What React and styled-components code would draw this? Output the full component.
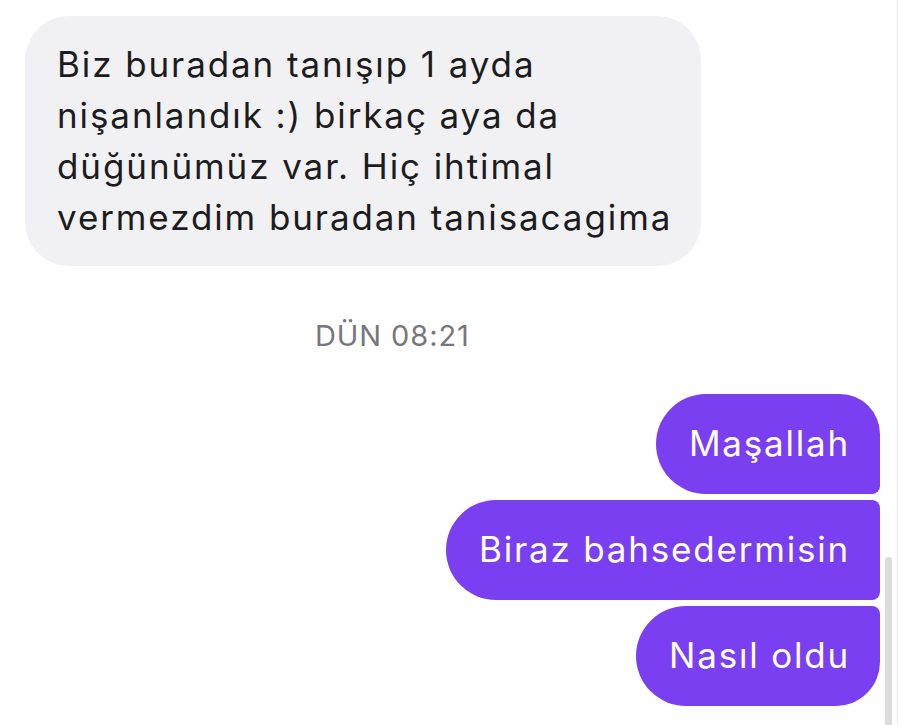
import React from 'react';
import styled, { createGlobalStyle } from 'styled-components';

const GlobalStyle = createGlobalStyle`
  html, body {
    margin: 0;
    padding: 0;
    background: #ffffff;
  }
  body {
    font-family: Inter, "Noto Sans", "Liberation Sans", sans-serif;
    -webkit-font-smoothing: antialiased;
  }
`;

const incoming = [
    'Biz buradan tanışıp 1 ayda',
    'nişanlandık :) birkaç aya da',
    'düğünümüz var. Hiç ihtimal',
    'vermezdim buradan tanisacagima',
];

const outgoing = ['Maşallah', 'Biraz bahsedermisin', 'Nasıl oldu'];

// köşe yarıçapları: grubun neresinde olduğuna göre
const corners = {
    first: '50px 40px 8px 50px',
    middle: '50px 8px 8px 50px',
    last: '50px 8px 44px 50px',
};

const App = () => {
    const groupPos = (i, n) => (i === 0 ? 'first' : i === n - 1 ? 'last' : 'middle');

    return (
        <>
            <GlobalStyle />
            <Screen>
                <Thread>
                    {/* gelen mesaj */}
                    <IncomingRow>
                        <GreyBubble>
                            {incoming.map((line) => (
                                <Line key={line}>{line}</Line>
                            ))}
                        </GreyBubble>
                    </IncomingRow>

                    {/* zaman */}
                    <Stamp>DÜN 08:21</Stamp>

                    {/* giden mesajlar */}
                    <OutgoingGroup>
                        {outgoing.map((text, i) => (
                            <PurpleBubble key={text} $pos={groupPos(i, outgoing.length)}>
                                {text}
                            </PurpleBubble>
                        ))}
                    </OutgoingGroup>
                </Thread>
                <ScrollThumb />
                <EdgeLine />
            </Screen>
        </>
    );
};

export default App;

/* CSS */
const Screen = styled.div`
    position: relative;
    width: 900px;
    height: 725px;
    overflow: hidden;
    background: #ffffff;
`;

const Thread = styled.div`
    display: flex;
    flex-direction: column;
    padding: 16px 20px 0 25px;
`;

const IncomingRow = styled.div`
    display: flex;
    justify-content: flex-start;
`;

const GreyBubble = styled.div`
    background: #f1f1f4;
    color: #1c1c1e;
    border-radius: 44px;
    padding: 23px 29px 23px 32px;
    font-size: 35px;
    line-height: 51px;
    letter-spacing: 1.9px;
`;

const Line = styled.div`
    white-space: nowrap;
`;

const Stamp = styled.div`
    margin: 52px 0 0 290px;
    color: #76767b;
    font-size: 29px;
    line-height: 36px;
    letter-spacing: 0.9px;
`;

const OutgoingGroup = styled.div`
    margin-top: 40px;
    display: flex;
    flex-direction: column;
    align-items: flex-end;
    gap: 6px;
`;

const PurpleBubble = styled.div`
    background: #7b3ff2;
    color: #ffffff;
    border-radius: ${(p) => corners[p.$pos]};
    padding: 24px 30px 25px 33px;
    font-size: 35px;
    line-height: 51px;
    letter-spacing: 1.8px;
    white-space: nowrap;
`;

const ScrollThumb = styled.div`
    position: absolute;
    left: 885px;
    top: 557px;
    width: 7px;
    height: 200px;
    border-radius: 4px;
    background: #dcdcde;
`;

const EdgeLine = styled.div`
    position: absolute;
    right: 2px;
    top: 0;
    width: 1px;
    height: 100%;
    background: #e6efe4;
`;
